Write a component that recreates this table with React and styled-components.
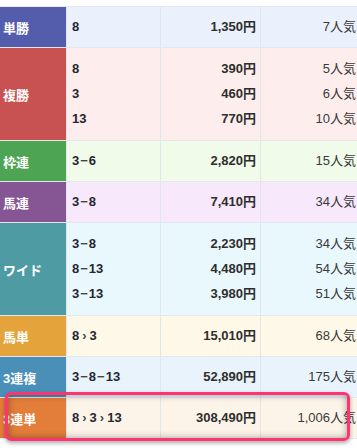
import styled, { createGlobalStyle } from "styled-components";

const GlobalStyle = createGlobalStyle`
  html, body {
    margin: 0;
    padding: 0;
    background: #ffffff;
  }
  body {
    font-family: "Liberation Sans", "Noto Sans CJK JP", sans-serif;
    color: #333333;
  }
`;

const Page = styled.div`
  width: 357px;
  height: 448px;
  overflow: hidden;
  padding-top: 6px;
  box-sizing: border-box;
`;

const Table = styled.div`
  border-top: 1px solid #e4e8ef;
`;

const Row = styled.div`
  position: relative;
  display: grid;
  grid-template-columns: 66px 94px 100px 1fr;
  background: ${(p) => p.$bg};
  border-bottom: 1px solid #e3e7ee;
`;

const Label = styled.div`
  display: flex;
  align-items: center;
  padding-left: 3px;
  background: ${(p) => p.$color};
  color: #ffffff;
  font-size: 13px;
  font-weight: bold;
  box-shadow: 0 1px 0 #e6e6ea;
`;

const Cell = styled.div`
  display: flex;
  flex-direction: column;
  gap: 1px;
  padding: ${(p) => (p.$multi ? "9px" : "8px")} 0;
  border-left: 1px solid #e1e5ec;
  font-size: 13px;
  text-align: ${(p) => p.$align || "left"};
`;

const Combo = styled(Cell)`
  padding-left: 5px;
  font-weight: bold;
  color: #262630;
`;

const Payout = styled(Cell)`
  padding-right: 4px;
  font-weight: bold;
  color: #2e2e2e;
`;

const Rank = styled(Cell)`
  padding-right: 1px;
  color: #3a3a3a;
`;

const Line = styled.div`
  height: 24px;
  line-height: 24px;
  white-space: nowrap;
`;

const Sep = styled.span`
  display: inline-block;
  margin: 0 ${(p) => (p.$arrow ? "3px" : "1px")};
  font-weight: bold;
  color: #444;
`;

const Highlight = styled.div`
  position: absolute;
  left: 5px;
  right: 7px;
  top: -6px;
  bottom: -3px;
  border: 3px solid #fc3570;
  border-radius: 6px;
  box-shadow: 0 2px 4px rgba(0, 0, 0, 0.35), inset 0 0 7px rgba(0, 0, 0, 0.38);
  pointer-events: none;
`;

const rows = [
  { label: "単勝", color: "#545dab", bg: "#eaf0fc", items: [["8", "1,350", "7"]] },
  {
    label: "複勝",
    color: "#c85151",
    bg: "#fdeded",
    items: [
      ["8", "390", "5"],
      ["3", "460", "6"],
      ["13", "770", "10"],
    ],
  },
  { label: "枠連", color: "#4da452", bg: "#f0fbea", items: [["3-6", "2,820", "15"]] },
  { label: "馬連", color: "#865694", bg: "#f8e8fb", items: [["3-8", "7,410", "34"]] },
  {
    label: "ワイド",
    color: "#4f9ba3",
    bg: "#e9f8fd",
    items: [
      ["3-8", "2,230", "34"],
      ["8-13", "4,480", "54"],
      ["3-13", "3,980", "51"],
    ],
  },
  { label: "馬単", color: "#e5a43b", bg: "#fef8e8", items: [["8>3", "15,010", "68"]] },
  { label: "3連複", color: "#4a8fb8", bg: "#e8f3fc", items: [["3-8-13", "52,890", "175"]] },
  { label: "3連単", color: "#e27d3a", bg: "#fcf4e9", items: [["8>3>13", "308,490", "1,006"]], hot: true },
];

function renderCombo(text) {
  const parts = text.split(/([->])/);
  return parts.map((p, i) => {
    if (p === "-") return <Sep key={i}>−</Sep>;
    if (p === ">") return <Sep key={i} $arrow>›</Sep>;
    return <span key={i}>{p}</span>;
  });
}

export default function App() {
  return (
    <Page>
      <GlobalStyle />
      <Table>
        {rows.map((r) => {
          const multi = r.items.length > 1;
          return (
            <Row key={r.label} $bg={r.bg}>
              <Label $color={r.color}>{r.label}</Label>
              <Combo $multi={multi}>
                {r.items.map((it, i) => (
                  <Line key={i}>{renderCombo(it[0])}</Line>
                ))}
              </Combo>
              <Payout $multi={multi} $align="right">
                {r.items.map((it, i) => (
                  <Line key={i}>{it[1]}円</Line>
                ))}
              </Payout>
              <Rank $multi={multi} $align="right">
                {r.items.map((it, i) => (
                  <Line key={i}>{it[2]}人気</Line>
                ))}
              </Rank>
              {r.hot && <Highlight />}
            </Row>
          );
        })}
      </Table>
    </Page>
  );
}
